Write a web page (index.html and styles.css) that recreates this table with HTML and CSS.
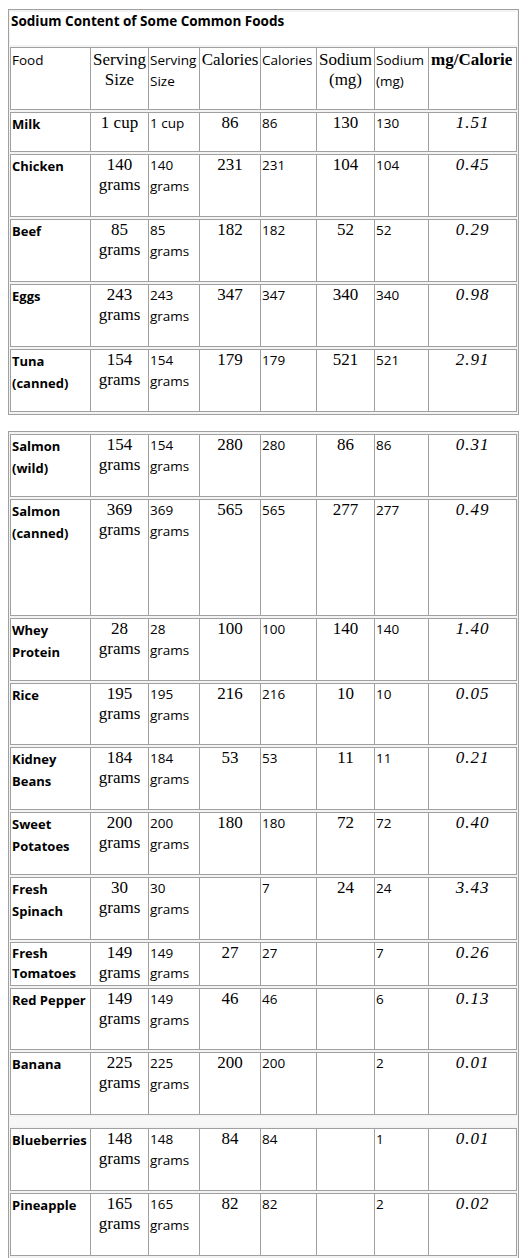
FILE: index.html
```html
<!DOCTYPE html>
<html>
<head>
<meta charset="utf-8">
<link rel="stylesheet" href="styles.css">
<title>Sodium Content of Some Common Foods</title>
</head>
<body>
<table class="tbl first">
  <colgroup>
    <col class="c-food"><col class="c-s1"><col class="c-s2"><col class="c-c1"><col class="c-c2"><col class="c-n1"><col class="c-n2"><col class="c-mg">
  </colgroup>
  <tr class="r-title"><td class="title" colspan="8">Sodium Content of Some Common Foods</td></tr>
  <tr class="r-std head">
    <td class="sans">Food</td>
    <td class="serif">Serving Size</td>
    <td class="sans">Serving Size</td>
    <td class="serif">Calories</td>
    <td class="sans">Calories</td>
    <td class="serif">Sodium (mg)</td>
    <td class="sans">Sodium (mg)</td>
    <td class="serif bold left">mg/Calorie</td>
  </tr>
  <tr class="r-short"><td class="food">Milk</td><td class="serif">1 cup</td><td class="sans">1 cup</td><td class="serif">86</td><td class="sans">86</td><td class="serif">130</td><td class="sans">130</td><td class="ratio">1.51</td></tr>
  <tr class="r-std"><td class="food">Chicken</td><td class="serif">140 grams</td><td class="sans">140 grams</td><td class="serif">231</td><td class="sans">231</td><td class="serif">104</td><td class="sans">104</td><td class="ratio">0.45</td></tr>
  <tr class="r-std"><td class="food">Beef</td><td class="serif">85 grams</td><td class="sans">85 grams</td><td class="serif">182</td><td class="sans">182</td><td class="serif">52</td><td class="sans">52</td><td class="ratio">0.29</td></tr>
  <tr class="r-std"><td class="food">Eggs</td><td class="serif">243 grams</td><td class="sans">243 grams</td><td class="serif">347</td><td class="sans">347</td><td class="serif">340</td><td class="sans">340</td><td class="ratio">0.98</td></tr>
  <tr class="r-std"><td class="food">Tuna (canned)</td><td class="serif">154 grams</td><td class="sans">154 grams</td><td class="serif">179</td><td class="sans">179</td><td class="serif">521</td><td class="sans">521</td><td class="ratio">2.91</td></tr>
</table>

<table class="tbl second">
  <colgroup>
    <col class="c-food"><col class="c-s1"><col class="c-s2"><col class="c-c1"><col class="c-c2"><col class="c-n1"><col class="c-n2"><col class="c-mg">
  </colgroup>
  <tr class="r-std"><td class="food">Salmon (wild)</td><td class="serif">154 grams</td><td class="sans">154 grams</td><td class="serif">280</td><td class="sans">280</td><td class="serif">86</td><td class="sans">86</td><td class="ratio">0.31</td></tr>
  <tr class="r-tall"><td class="food">Salmon (canned)</td><td class="serif">369 grams</td><td class="sans">369 grams</td><td class="serif">565</td><td class="sans">565</td><td class="serif">277</td><td class="sans">277</td><td class="ratio">0.49</td></tr>
  <tr class="r-std"><td class="food">Whey Protein</td><td class="serif">28 grams</td><td class="sans">28 grams</td><td class="serif">100</td><td class="sans">100</td><td class="serif">140</td><td class="sans">140</td><td class="ratio">1.40</td></tr>
  <tr class="r-std2"><td class="food">Rice</td><td class="serif">195 grams</td><td class="sans">195 grams</td><td class="serif">216</td><td class="sans">216</td><td class="serif">10</td><td class="sans">10</td><td class="ratio">0.05</td></tr>
  <tr class="r-std"><td class="food">Kidney Beans</td><td class="serif">184 grams</td><td class="sans">184 grams</td><td class="serif">53</td><td class="sans">53</td><td class="serif">11</td><td class="sans">11</td><td class="ratio">0.21</td></tr>
  <tr class="r-std"><td class="food">Sweet Potatoes</td><td class="serif">200 grams</td><td class="sans">200 grams</td><td class="serif">180</td><td class="sans">180</td><td class="serif">72</td><td class="sans">72</td><td class="ratio">0.40</td></tr>
  <tr class="r-std"><td class="food">Fresh Spinach</td><td class="serif">30 grams</td><td class="sans">30 grams</td><td class="serif"></td><td class="sans">7</td><td class="serif">24</td><td class="sans">24</td><td class="ratio">3.43</td></tr>
  <tr class="r-mid"><td class="food">Fresh Tomatoes</td><td class="serif">149 grams</td><td class="sans">149 grams</td><td class="serif">27</td><td class="sans">27</td><td class="serif"></td><td class="sans">7</td><td class="ratio">0.26</td></tr>
  <tr class="r-std2"><td class="food">Red Pepper</td><td class="serif">149 grams</td><td class="sans">149 grams</td><td class="serif">46</td><td class="sans">46</td><td class="serif"></td><td class="sans">6</td><td class="ratio">0.13</td></tr>
  <tr class="r-std"><td class="food">Banana</td><td class="serif">225 grams</td><td class="sans">225 grams</td><td class="serif">200</td><td class="sans">200</td><td class="serif"></td><td class="sans">2</td><td class="ratio">0.01</td></tr>
  <tr class="r-gap"><td class="gap" colspan="8"></td></tr>
  <tr class="r-std"><td class="food">Blueberries</td><td class="serif">148 grams</td><td class="sans">148 grams</td><td class="serif">84</td><td class="sans">84</td><td class="serif"></td><td class="sans">1</td><td class="ratio">0.01</td></tr>
  <tr class="r-std"><td class="food">Pineapple</td><td class="serif">165 grams</td><td class="sans">165 grams</td><td class="serif">82</td><td class="sans">82</td><td class="serif"></td><td class="sans">2</td><td class="ratio">0.02</td></tr>
</table>
</body>
</html>
```

FILE: styles.css
```css
html, body {
  margin: 0;
  padding: 0;
  background: #ffffff;
}

body {
  padding: 9px 0 0 8px;
  font-family: "Open Sans", "DejaVu Sans", sans-serif;
  color: #000;
}

.tbl {
  table-layout: fixed;
  width: 511px;
  border: 1px solid #a0a0a0;
  border-collapse: separate;
  border-spacing: 0 2px;
  padding: 0 1px;
  background: #f3f3f3;
  box-sizing: border-box;
}

.tbl.second {
  margin-top: 16px;
}

.c-food { width: 80px; }
.c-s1 { width: 58px; }
.c-s2 { width: 51px; }
.c-c1 { width: 61px; }
.c-c2 { width: 56px; }
.c-n1 { width: 58px; }
.c-n2 { width: 54px; }
.c-mg { width: 89px; }

.tbl td {
  background: #ffffff;
  border-left: 1px solid #a0a0a0;
  border-top: 1px solid #a0a0a0;
  border-bottom: 1px solid #a0a0a0;
  padding: 0 1px;
  vertical-align: top;
  overflow: hidden;
}

.tbl td:last-child {
  border-right: 1px solid #a0a0a0;
}

.tbl .head td {
  padding-top: 2px;
}

.tbl td.title {
  border: none;
  font-weight: 700;
  font-size: 13.5px;
  line-height: 18px;
  padding: 0 1px;
}

.tbl td.gap {
  border: none;
  background: #f7f7f7;
  padding: 0;
}

.r-title { height: 33px; }
.r-std { height: 63px; }
.r-std2 { height: 62px; }
.r-short { height: 40px; }
.r-tall { height: 117px; }
.r-mid { height: 44px; }
.r-gap { height: 9px; }

.food {
  font-family: "Open Sans", "DejaVu Sans", sans-serif;
  font-weight: 700;
  font-size: 13px;
  line-height: 22px;
  text-align: left;
}

.sans {
  font-family: "Open Sans", "DejaVu Sans", sans-serif;
  font-size: 13.5px;
  line-height: 21px;
  text-align: left;
}

.r-mid .food,
.r-mid .sans {
  line-height: 20px;
}

.serif {
  font-family: "Liberation Serif", "Times New Roman", serif;
  font-size: 17px;
  line-height: 20px;
  text-align: center;
}

.serif.bold {
  font-weight: 700;
}

.serif.left {
  text-align: left;
  padding-left: 2px;
}

.ratio {
  font-family: "Liberation Serif", "Times New Roman", serif;
  font-style: italic;
  font-size: 17px;
  line-height: 20px;
  letter-spacing: 1px;
  text-align: center;
}
```
